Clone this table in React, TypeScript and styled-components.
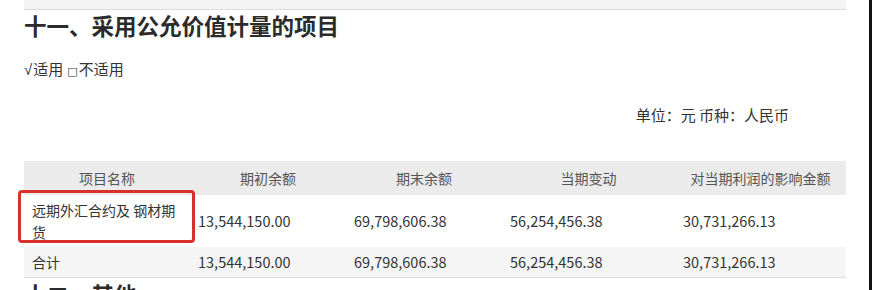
import { FC } from "react"
import styled, { createGlobalStyle } from "styled-components"

const GlobalStyle = createGlobalStyle`
    html, body {
        margin: 0;
        padding: 0;
        background: #fff;
    }
    body {
        font-family: "Noto Sans CJK SC", "Noto Sans", sans-serif;
        color: #333;
    }
`

const Screen = styled.div`
    display: flex;
    width: 872px;
    height: 290px;
    overflow: hidden;
`

const Article = styled.div`
    width: 822px;
    padding: 0 23px 0 24px;
`

const EdgeBar = styled.div`
    width: 3px;
    background: #111;
`

const PrevRow = styled.div`
    height: 9px;
    background: #f3f3f3;
    border-bottom: 1px solid #dcdcdc;
`

const SectionTitle = styled.h2<{ $gap?: number }>`
    margin: ${p => p.$gap ?? 0}px 0 0;
    font-size: 22.5px;
    line-height: 30px;
    font-weight: 700;
    color: #2b2b2b;
    white-space: nowrap;
`

const Applicable = styled.div`
    margin-top: 18px;
    font-size: 15px;
    line-height: 22px;
    color: #333;
`

const Tick = styled.span`
    font-family: "Liberation Sans", sans-serif;
    font-size: 15px;
    margin-right: 1px;
`

const SmallBox = styled.span`
    font-family: "DejaVu Sans", sans-serif;
    font-size: 11px;
    margin: 0 1px 0 4px;
`

const UnitLine = styled.div`
    margin-top: 21px;
    padding-right: 57px;
    text-align: right;
    font-size: 15px;
    line-height: 22px;
    color: #333;
`

const Table = styled.table`
    margin-top: 35px;
    width: 822px;
    border-collapse: collapse;
    table-layout: fixed;
    font-size: 14px;
    line-height: 22px;
`

const HeadCell = styled.th`
    background: #ebebeb;
    padding: 6px 8px;
    font-size: 14px;
    font-weight: 400;
    color: #555;
    text-align: center;
`

const Row = styled.tr<{ $shaded?: boolean }>`
    background: ${p => (p.$shaded ? "#f5f5f5" : "#fff")};
    border-bottom: ${p => (p.$shaded ? "1px solid #dedede" : "none")};
`

const Cell = styled.td`
    position: relative;
    padding: 4px 8px;
    text-align: left;
    vertical-align: middle;
    color: #333;
`

const Amount = styled(Cell)`
    font-size: 14.5px;
`

const Highlight = styled.span`
    position: absolute;
    left: -6px;
    right: -5px;
    top: -5px;
    bottom: 4px;
    border: 3px solid #d8312c;
    border-radius: 4px;
    pointer-events: none;
`

const columns = [
    { title: "项目名称", width: 166 },
    { title: "期初余额", width: 156 },
    { title: "期末余额", width: 156 },
    { title: "当期变动", width: 173 },
    { title: "对当期利润的影响金额", width: 171 },
]

const rows = [
    { name: "远期外汇合约及 钢材期货", marked: true, values: ["13,544,150.00", "69,798,606.38", "56,254,456.38", "30,731,266.13"] },
    { name: "合计", marked: false, values: ["13,544,150.00", "69,798,606.38", "56,254,456.38", "30,731,266.13"] },
]

const App: FC = () => {
    return (
        <>
            <GlobalStyle />
            <Screen>
                <Article>
                    <PrevRow />
                    <SectionTitle>十一、采用公允价值计量的项目</SectionTitle>
                    <Applicable>
                        <Tick>√</Tick>适用<SmallBox>□</SmallBox>不适用
                    </Applicable>
                    <UnitLine>单位：元 币种：人民币</UnitLine>
                    <Table>
                        <colgroup>
                            {columns.map(col => (
                                <col key={col.title} style={{ width: col.width }} />
                            ))}
                        </colgroup>
                        <thead>
                            <tr>
                                {columns.map(col => (
                                    <HeadCell key={col.title}>{col.title}</HeadCell>
                                ))}
                            </tr>
                        </thead>
                        <tbody>
                            {rows.map((row, i) => (
                                <Row key={row.name} $shaded={i % 2 === 1}>
                                    <Cell>
                                        {row.name}
                                        {row.marked && <Highlight />}
                                    </Cell>
                                    {row.values.map((v, j) => (
                                        <Amount key={j}>{v}</Amount>
                                    ))}
                                </Row>
                            ))}
                        </tbody>
                    </Table>
                    <SectionTitle $gap={1}>十二、其他</SectionTitle>
                </Article>
                <EdgeBar />
            </Screen>
        </>
    )
}

export default App
